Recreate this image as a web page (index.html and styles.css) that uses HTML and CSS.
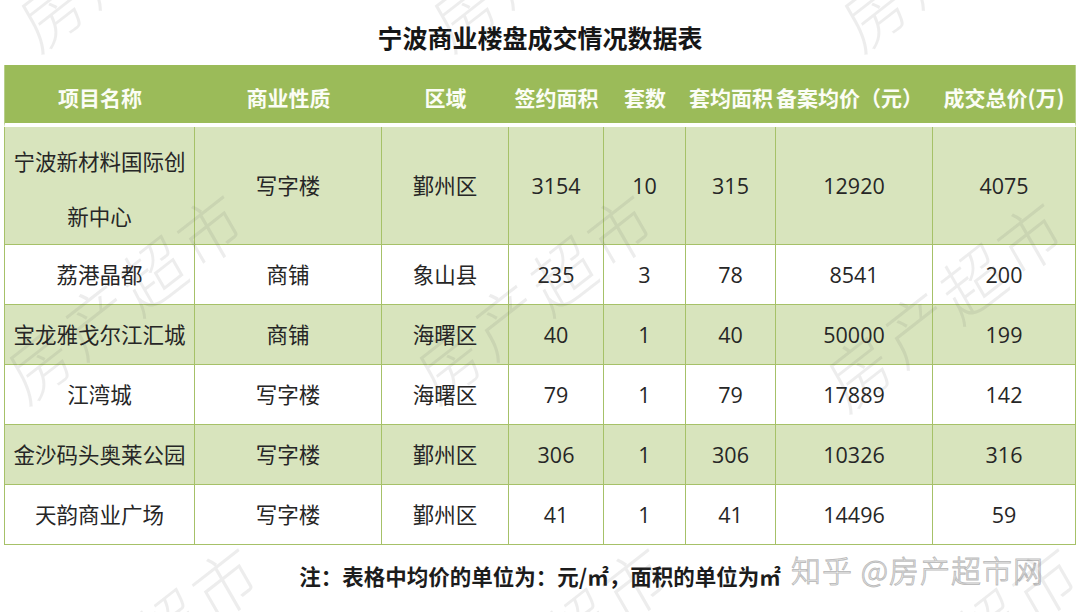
FILE: index.html
```html
<!DOCTYPE html>
<html lang="zh-CN">
<head>
<meta charset="utf-8">
<title>宁波商业楼盘成交情况数据表</title>
<link rel="stylesheet" href="styles.css">
</head>
<body>
<div class="page">
  <h1 class="title">宁波商业楼盘成交情况数据表</h1>
  <div class="table">
    <div class="row head">
      <div class="cell">项目名称</div>
      <div class="cell">商业性质</div>
      <div class="cell">区域</div>
      <div class="cell">签约面积</div>
      <div class="cell">套数</div>
      <div class="cell">套均面积</div>
      <div class="cell h-price">备案均价（元）</div>
      <div class="cell">成交总价(万)</div>
    </div>
    <div class="row alt">
      <div class="cell name wrap">宁波新材料国际创新中心</div>
      <div class="cell">写字楼</div>
      <div class="cell">鄞州区</div>
      <div class="cell">3154</div>
      <div class="cell">10</div>
      <div class="cell">315</div>
      <div class="cell">12920</div>
      <div class="cell">4075</div>
    </div>
    <div class="row">
      <div class="cell name">荔港晶都</div>
      <div class="cell">商铺</div>
      <div class="cell">象山县</div>
      <div class="cell">235</div>
      <div class="cell">3</div>
      <div class="cell">78</div>
      <div class="cell">8541</div>
      <div class="cell">200</div>
    </div>
    <div class="row alt">
      <div class="cell name">宝龙雅戈尔江汇城</div>
      <div class="cell">商铺</div>
      <div class="cell">海曙区</div>
      <div class="cell">40</div>
      <div class="cell">1</div>
      <div class="cell">40</div>
      <div class="cell">50000</div>
      <div class="cell">199</div>
    </div>
    <div class="row">
      <div class="cell name">江湾城</div>
      <div class="cell">写字楼</div>
      <div class="cell">海曙区</div>
      <div class="cell">79</div>
      <div class="cell">1</div>
      <div class="cell">79</div>
      <div class="cell">17889</div>
      <div class="cell">142</div>
    </div>
    <div class="row alt">
      <div class="cell name">金沙码头奥莱公园</div>
      <div class="cell">写字楼</div>
      <div class="cell">鄞州区</div>
      <div class="cell">306</div>
      <div class="cell">1</div>
      <div class="cell">306</div>
      <div class="cell">10326</div>
      <div class="cell">316</div>
    </div>
    <div class="row">
      <div class="cell name">天韵商业广场</div>
      <div class="cell">写字楼</div>
      <div class="cell">鄞州区</div>
      <div class="cell">41</div>
      <div class="cell">1</div>
      <div class="cell">41</div>
      <div class="cell">14496</div>
      <div class="cell">59</div>
    </div>
  </div>
  <p class="note">注：表格中均价的单位为：元/㎡，面积的单位为㎡</p>
  <div class="zhihu">知乎 @房产超市网</div>
  <div class="watermarks" aria-hidden="true">
    <span class="wm wm1">房产超市</span>
    <span class="wm wm2">房产超市</span>
    <span class="wm wm3">房产超市</span>
    <span class="wm wm4">房产超市</span>
    <span class="wm wm5">房产超市</span>
    <span class="wm wm6">房产超市</span>
    <span class="wm wm7">房产超市</span>
    <span class="wm wm8">房产超市</span>
    <span class="wm wm9">房产超市</span>
  </div>
</div>
</body>
</html>
```

FILE: styles.css
```css
* { box-sizing: border-box; }

html, body {
  margin: 0;
  padding: 0;
  background: #ffffff;
}

.page {
  position: relative;
  width: 1080px;
  height: 612px;
  overflow: hidden;
  font-family: "Open Sans", "Noto Sans CJK SC", sans-serif;
  color: #262626;
}

.title {
  margin: 0;
  padding-top: 22px;
  height: 65px;
  line-height: 30px;
  font-family: "Noto Sans CJK SC", sans-serif;
  font-size: 25px;
  font-weight: 700;
  text-align: center;
  color: #161616;
}

.table {
  margin-left: 4px;
  width: 1072px;
  display: grid;
  grid-template-columns: 191px 187px 127px 95px 82px 90px 157px 143px;
  grid-template-rows: 62px 118px repeat(5, 60px);
}

.row { display: contents; }

.cell {
  display: flex;
  align-items: center;
  justify-content: center;
  text-align: center;
  font-size: 21.5px;
  line-height: 30px;
  border-right: 1px solid #a6c168;
  border-bottom: 1px solid #a6c168;
  background: #ffffff;
  padding: 0 4px;
}

.cell:first-child { border-left: 1px solid #a6c168; }

.alt .cell { background: #d8e4bd; }

.cell.wrap { line-height: 55px; padding-top: 6px; }

.head .cell {
  background: #9bbb59;
  color: #fbfdf5;
  font-family: "Noto Sans CJK SC", sans-serif;
  font-size: 21px;
  font-weight: 700;
  border: none;
  border-bottom: 4px solid #ffffff;
  padding: 6px 0 0;
  white-space: nowrap;
}

.head .cell:first-child { border-left: 1px solid #b8cf8a; }
.head .cell:last-child { border-right: 1px solid #b8cf8a; }

.head .h-price { padding-right: 10px; }

.note {
  margin: 16px 0 0;
  line-height: 30px;
  text-align: center;
  font-family: "Noto Sans CJK SC", sans-serif;
  font-size: 21.5px;
  font-weight: 700;
  color: #1c1c1c;
}

.zhihu {
  position: absolute;
  left: 791px;
  top: 549px;
  font-family: "Noto Sans CJK SC", sans-serif;
  font-size: 30px;
  line-height: 40px;
  font-weight: 300;
  letter-spacing: 1px;
  color: rgba(255, 255, 255, 0.9);
  -webkit-text-stroke: 1px rgba(160, 160, 160, 0.7);
  white-space: nowrap;
}

.watermarks {
  position: absolute;
  inset: 0;
  pointer-events: none;
}

.wm {
  position: absolute;
  font-family: "Noto Sans CJK SC", sans-serif;
  font-size: 66px;
  font-weight: 300;
  line-height: 1;
  letter-spacing: 6px;
  color: rgba(90, 90, 90, 0.11);
  white-space: nowrap;
  transform: translate(-50%, -50%) rotate(-38deg) skewX(-8deg);
}

.wm1 { left: 137px; top: -60px; }
.wm2 { left: 550px; top: -60px; }
.wm3 { left: 960px; top: -60px; }
.wm4 { left: 125px; top: 292px; }
.wm5 { left: 535px; top: 292px; }
.wm6 { left: 945px; top: 300px; }
.wm7 { left: 140px; top: 645px; }
.wm8 { left: 550px; top: 645px; }
.wm9 { left: 960px; top: 645px; }
```
